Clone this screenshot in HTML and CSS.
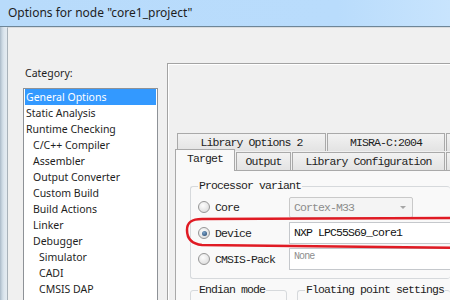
FILE: index.html
```html
<!DOCTYPE html>
<html lang="en">
<head>
    <meta charset="UTF-8">
    <title>Options for node "core1_project"</title>
    <link rel="stylesheet" href="styles.css">
</head>
<body>

    <div class="window">
        <div class="titlebar">Options for node "core1_project"</div>

        <div class="frame">
            <div class="edge"></div>

            <div class="client">
                <div class="categories">
                    <div class="cat-label">Category:</div>
                    <ul class="cat-list">
                        <li class="selected">General Options</li>
                        <li>Static Analysis</li>
                        <li>Runtime Checking</li>
                        <li class="sub">C/C++ Compiler</li>
                        <li class="sub">Assembler</li>
                        <li class="sub">Output Converter</li>
                        <li class="sub">Custom Build</li>
                        <li class="sub">Build Actions</li>
                        <li class="sub">Linker</li>
                        <li class="sub">Debugger</li>
                        <li class="sub2">Simulator</li>
                        <li class="sub2">CADI</li>
                        <li class="sub2">CMSIS DAP</li>
                    </ul>
                </div>

                <div class="options">
                    <div class="tab-row back">
                        <span class="tab libopt2">Library Options 2</span>
                        <span class="tab misra">MISRA-C:2004</span>
                        <span class="tab rest"></span>
                    </div>
                    <div class="tab-row front">
                        <span class="tab active target">Target</span>
                        <span class="tab output">Output</span>
                        <span class="tab libconf">Library Configuration</span>
                        <span class="tab rest">L</span>
                    </div>

                    <div class="page">
                        <fieldset class="group variant">
                            <legend>Processor variant</legend>
                            <div class="variant-row">
                                <span class="radio"></span>
                                <span class="radio-label">Core</span>
                                <span class="combo disabled">Cortex-M33<span class="arrow"></span></span>
                            </div>
                            <div class="variant-row">
                                <span class="radio checked"></span>
                                <span class="radio-label">Device</span>
                                <span class="field">NXP LPC55S69_core1</span>
                            </div>
                            <div class="variant-row">
                                <span class="radio"></span>
                                <span class="radio-label">CMSIS-Pack</span>
                                <span class="field empty">None</span>
                            </div>
                        </fieldset>

                        <div class="group-row">
                            <fieldset class="group endian"><legend>Endian mode</legend></fieldset>
                            <fieldset class="group fpu"><legend>Floating point settings</legend></fieldset>
                        </div>

                        <!-- hand drawn red mark around the Device row -->
                        <svg class="mark" width="280" height="100" viewBox="0 0 280 100">
                            <path d="M 290 47 L 26 48 C 16 48 11 51 11 59 C 11 68 16 73 26 74 L 290 77"
                                  fill="none" stroke="#e01b24" stroke-width="2.5" stroke-linecap="round"/>
                        </svg>
                    </div>
                </div>
            </div>
        </div>
    </div>

</body>
</html>
```

FILE: styles.css
```css
/* dialog look */
body {
    margin: 0;
    width: 450px;
    height: 300px;
    overflow: hidden;
    background: #f0f0f0;
    font-family: 'Noto Sans', 'Open Sans', sans-serif;
    color: #1e1e1e;
}

.window { width: 450px; height: 300px; display: flex; flex-direction: column; overflow: hidden; }

.titlebar {
    height: 26px;
    line-height: 26px;
    padding-left: 8px;
    font-size: 12px;
    background: linear-gradient(90deg, #b8dbfb 0%, #b9dcfc 75%, #c8e4fd 100%);
    border-bottom: 1px solid #6e8698;
    flex-shrink: 0;
}

.frame { flex: 1; display: flex; min-height: 0; overflow: hidden; }

.edge {
    width: 7px;
    flex-shrink: 0;
    background: linear-gradient(90deg, #aab9c7 0, #c9d6e1 2px, #dde6ee 4px, #e4ebf1 7px);
}

.client {
    flex: 1;
    min-width: 0;
    display: flex;
    border-left: 1px solid #a9b2ba;
    border-top: 1px solid #dadcde;
    background: #f0f0f0;
}

/* category list */
.categories { padding: 37px 0 0 15px; width: 135px; flex-shrink: 0; }

.cat-label { height: 16px; line-height: 16px; font-size: 10.5px; margin-bottom: 7px; padding-left: 2px; }

.cat-list {
    list-style: none;
    margin: 0;
    padding: 0 1px;
    height: 230px;
    background: #fff;
    border: 1px solid #8e9297;
    border-bottom: none;
    font-size: 10.5px;
}

.cat-list li { height: 16px; line-height: 16px; padding-left: 1px; white-space: nowrap; }
.cat-list li.sub { padding-left: 8px; }
.cat-list li.sub2 { padding-left: 14px; }
.cat-list li.selected { background: #3399ff; color: #fff; }

/* right side panel */
.options {
    flex: 1;
    min-width: 0;
    overflow: hidden;
    margin: 35px 0 0 9px;
    padding: 69px 0 0 7px;
    border: 1px solid #a3a3a3;
    border-right: none;
    border-bottom: none;
    box-shadow: inset 1px 1px #ffffff;
    font-family: 'Liberation Mono', monospace;
    font-size: 11.5px;
    letter-spacing: -0.9px;
}

.tab-row { display: flex; gap: 1px; white-space: nowrap; }
.tab-row.back { padding-left: 2px; height: 18px; }
.tab-row.front { margin-top: -2px; height: 21px; align-items: flex-end; }

.tab {
    height: 17px;
    line-height: 17px;
    text-align: center;
    background: linear-gradient(#f2f2f2, #e3e3e3);
    border: 1px solid #a9a9a9;
    border-bottom: none;
    flex-shrink: 0;
}

.tab.libopt2 { width: 147px; }
.tab.misra { width: 116px; }
.tab.target { width: 58px; }
.tab.output { width: 53px; }
.tab.libconf { width: 151px; }
.tab.rest { width: 40px; text-align: left; padding-left: 3px; }

.tab.active {
    height: 21px;
    line-height: 18px;
    margin-bottom: -1px;
    background: #f9f9f9;
    position: relative;
    z-index: 1;
}

.page {
    position: relative;
    height: 140px;
    background: #f9f9f9;
    border: 1px solid #a9a9a9;
    border-right: none;
    padding: 9px 0 0 14px;
}

.group {
    margin: 0;
    padding: 2px 0 6px 7px;
    border: 1px solid #d6d9dc;
    border-radius: 3px;
    border-right: none;
}

.group legend { padding: 0 1px; height: 12px; line-height: 12px; }

.variant-row { display: flex; align-items: center; height: 26px; }

.radio {
    width: 10px;
    height: 10px;
    flex-shrink: 0;
    border-radius: 50%;
    border: 1px solid #969696;
    background: radial-gradient(circle at 40% 35%, #fdfdfd, #d6d6d6);
    display: flex;
    align-items: center;
    justify-content: center;
}

.radio.checked::after {
    content: "";
    width: 5px;
    height: 5px;
    border-radius: 50%;
    background: radial-gradient(circle at 40% 35%, #7fa6cc, #1d3f66);
}

.radio-label { width: 74px; flex-shrink: 0; padding-left: 5px; }

.combo, .field {
    padding-left: 4px;
    box-sizing: border-box;
}

.combo {
    width: 124px;
    flex-shrink: 0;
    height: 21px;
    line-height: 19px;
    border: 1px solid #c9c9c9;
    border-radius: 2px;
    background: #f4f4f4;
    color: #8c8c8c;
    display: flex;
    justify-content: space-between;
    align-items: center;
}

.combo .arrow {
    width: 0;
    height: 0;
    margin-right: 6px;
    border-left: 3px solid transparent;
    border-right: 3px solid transparent;
    border-top: 3px solid #a6a6a6;
}

.field {
    flex: 1;
    height: 22px;
    line-height: 20px;
    background: #fff;
    border: 1px solid #c5c8cc;
    border-right: none;
    color: #111;
    white-space: nowrap;
}

.field.empty { color: #8e8e8e; font-size: 10px; line-height: 16px; }

.group-row { display: flex; gap: 10px; margin-top: 5px; }
.group.endian { width: 88px; flex-shrink: 0; border-right: 1px solid #d6d9dc; height: 20px; }
.group.fpu { flex: 1; height: 20px; }

.mark { position: absolute; left: 0; top: 0; }
```
